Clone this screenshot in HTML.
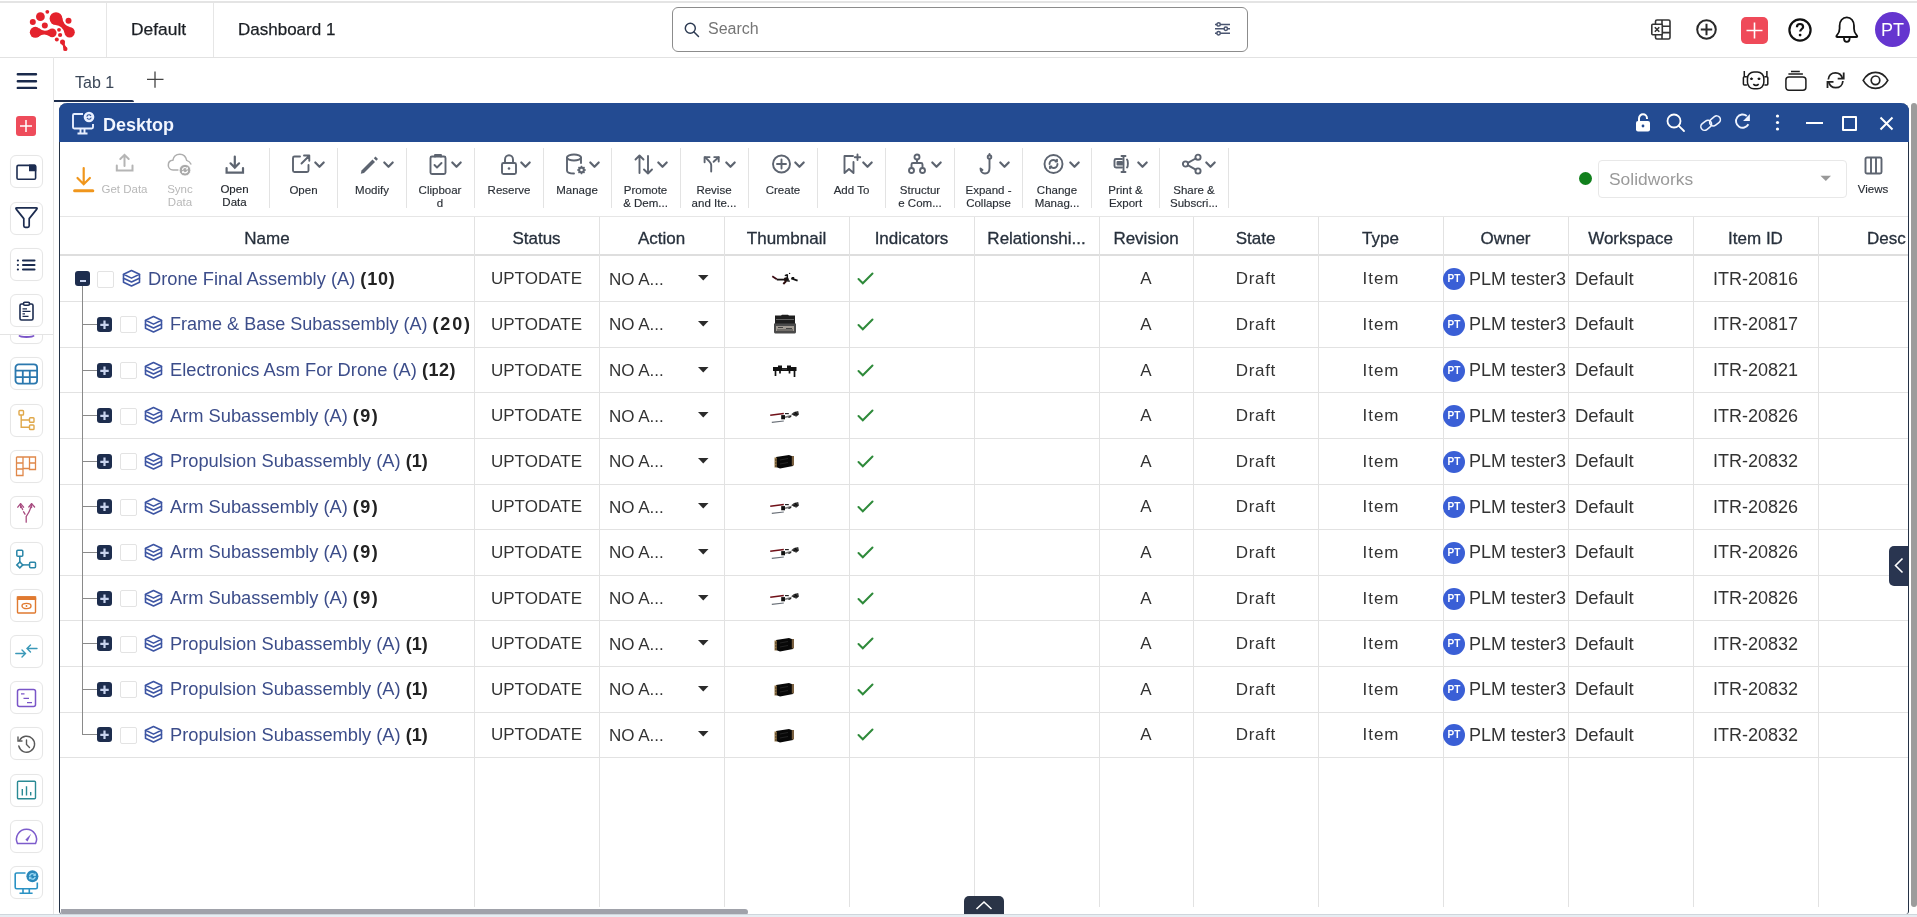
<!DOCTYPE html><html><head><meta charset="utf-8"><style>
*{box-sizing:border-box}
html,body{margin:0;padding:0}
body{width:1917px;height:917px;overflow:hidden;position:relative;background:#fff;font-family:"Liberation Sans",sans-serif;color:#222}
.abs{position:absolute}
.t{position:absolute;white-space:nowrap;line-height:1}
svg{position:absolute;overflow:visible}
.sb{position:absolute;left:10px;width:33px;height:33px;border:1px solid #e6e6e6;border-radius:6px;background:#fff;box-shadow:0 0 1px rgba(0,0,0,0.04)}
.vl{position:absolute;width:1px;background:#e0e0e0}
.hl{position:absolute;height:1px;background:#e0e0e0}
.tb{position:absolute;font-size:11.5px;color:#2a2f36;text-align:center;line-height:12.6px;-webkit-text-stroke:0.15px #2a2f36}
.hd{position:absolute;top:230px;font-size:17px;color:#27303c;line-height:1;text-align:center;-webkit-text-stroke:0.3px #27303c}
.cell{position:absolute;font-size:17px;color:#333;line-height:1;white-space:nowrap}
</style></head><body><div id="root" style="position:absolute;left:0;top:0;width:1917px;height:917px;will-change:transform">

<div class="abs" style="left:0;top:1px;width:1917px;height:2px;background:#e4e4e4"></div>
<div class="abs" style="left:0;top:57px;width:1917px;height:1px;background:#e2e2e2"></div>
<div class="abs" style="left:106px;top:3px;width:1px;height:54px;background:#e6e6e6"></div>
<div class="abs" style="left:213px;top:3px;width:1px;height:54px;background:#e6e6e6"></div>
<svg style="left:0;top:0" width="106" height="57" viewBox="0 0 106 57">
<g fill="#e4222c">
<circle cx="47.3" cy="11.8" r="1.9"/>
<circle cx="40.4" cy="16.7" r="4.4"/>
<circle cx="32.8" cy="21.9" r="3"/>
<circle cx="44.8" cy="25.4" r="3"/>
<circle cx="56" cy="18.6" r="6.4"/>
<circle cx="69.6" cy="32.3" r="5.2"/>
<path d="M55.58 24.99 Q62.45 25.80 64.41 32.61 L69.94 27.11 Q63.15 25.10 62.39 18.22 Z"/>
<circle cx="68.5" cy="20.8" r="3"/>
<circle cx="35.3" cy="32.3" r="5.5"/>
<circle cx="52.2" cy="32.8" r="4.4"/>
<path d="M38.81 36.53 Q43.74 32.75 49.19 36.01 L49.39 29.42 Q43.76 32.35 39.06 28.28 Z"/>
<circle cx="59" cy="29.8" r="1.9"/>
<circle cx="60.1" cy="35" r="2.1"/>
<circle cx="56.8" cy="39.6" r="2"/>
<circle cx="62.5" cy="42.1" r="2.5"/>
<circle cx="65.3" cy="48.9" r="2.2"/>
<path d="M61.40 44.34 Q63.53 45.65 63.22 48.18 L66.27 46.93 Q64.27 45.35 64.86 42.92 Z"/>
</g></svg>
<div class="t" style="left:131px;top:21px;font-size:17.4px;color:#1b1f24;-webkit-text-stroke:0.25px #1b1f24">Default</div>
<div class="t" style="left:238px;top:21px;font-size:17px;color:#1b1f24;-webkit-text-stroke:0.25px #1b1f24">Dashboard 1</div>
<div class="abs" style="left:672px;top:7px;width:576px;height:45px;border:1px solid #8c8c8c;border-radius:6px"></div>
<svg style="left:684px;top:22px" width="16" height="16" viewBox="0 0 16 16"><circle cx="6.3" cy="6.3" r="5" fill="none" stroke="#2c3a52" stroke-width="1.45"/><path d="M10 10 L14.5 14.6" stroke="#2c3a52" stroke-width="1.45" stroke-linecap="round"/></svg>
<div class="t" style="left:708px;top:21px;font-size:16px;color:#757575">Search</div>
<svg style="left:1214px;top:20px" width="17" height="17" viewBox="0 0 17 17" fill="none" stroke="#4a5570" stroke-width="1.5">
<path d="M1 4.4H16M1 8.75H16M1 13.3H16"/><circle cx="4.6" cy="4.4" r="1.7" fill="#fff"/><circle cx="11.8" cy="8.75" r="1.7" fill="#fff"/><circle cx="4.6" cy="13.3" r="1.7" fill="#fff"/></svg>
<svg style="left:1651px;top:19px" width="20" height="21" viewBox="0 0 20 21" fill="none" stroke="#333" stroke-width="1.6">
<rect x="4.5" y="1" width="14.5" height="19" rx="1.5"/><path d="M11 1V20M11 7.2H19M11 13.6H19"/>
<rect x="0.8" y="5.3" width="10.5" height="10.5" rx="1" fill="#fff"/><path d="M3.8 8.3L8.3 12.8M8.3 8.3L3.8 12.8"/></svg>
<svg style="left:1696px;top:19px" width="21" height="21" viewBox="0 0 21 21" fill="none" stroke="#2a2a2a" stroke-width="2"><circle cx="10.5" cy="10.5" r="9.3"/><path d="M10.5 4.8V16.2M4.8 10.5H16.2"/></svg>
<div class="abs" style="left:1741px;top:17px;width:27px;height:27px;background:#ef4a59;border-radius:5px"></div>
<svg style="left:1741px;top:17px" width="27" height="27" viewBox="0 0 27 27" stroke="#fff" stroke-width="1.6"><path d="M13.5 5.5V21.5M5.5 13.5H21.5"/></svg>
<svg style="left:1788px;top:18px" width="24" height="24" viewBox="0 0 24 24" fill="none" stroke="#111" stroke-width="2.2"><circle cx="12" cy="12" r="10.6"/><path d="M8.9 9.2C8.9 7.2 10.3 6 12 6C13.8 6 15.1 7.2 15.1 8.9C15.1 10.9 12.2 11.2 12.2 13.6"/><circle cx="12.1" cy="17.1" r="0.6" fill="#111" stroke-width="1.6"/></svg>
<svg style="left:1835px;top:16px" width="24" height="28" viewBox="0 0 24 28" fill="none" stroke="#111" stroke-width="1.8" stroke-linejoin="round"><path d="M2.2 18.8C3.8 17.2 4.6 15.5 4.6 12.5V9.8C4.6 4.8 7.6 1.4 11.8 1.4C16 1.4 19 4.8 19 9.8V12.5C19 15.5 19.8 17.2 21.4 18.8C22.4 19.8 22.6 21 21.4 21H2.2C1 21 1.2 19.8 2.2 18.8Z"/><path d="M9 21.2V22.6C9 24.6 10.2 25.9 11.8 25.9C13.4 25.9 14.6 24.6 14.6 22.6V21.2"/></svg>
<div class="abs" style="left:1875px;top:12px;width:35px;height:35px;background:#6535cf;border-radius:50%"></div>
<div class="t" style="left:1875px;top:21px;width:35px;text-align:center;font-size:18px;color:#fff">PT</div>
<div class="abs" style="left:53px;top:57px;width:1px;height:858px;background:#e6e6e6"></div>
<svg style="left:16px;top:72px" width="22" height="18" viewBox="0 0 22 18" stroke="#1a2a4c" stroke-width="2.4" stroke-linecap="round"><path d="M1.8 2.2H20M1.8 9.2H20M1.8 15.9H20"/></svg>
<div class="t" style="left:75px;top:75px;font-size:16px;color:#3b4758">Tab 1</div>
<svg style="left:146px;top:71px" width="18" height="18" viewBox="0 0 18 18" stroke="#444" stroke-width="1.3"><path d="M9 0.5V16.8M1 8.4H17.5"/></svg>
<div class="abs" style="left:54px;top:100px;width:80px;height:2px;background:#1d2d4e;border-top-right-radius:2px"></div>
<svg style="left:1742px;top:70px" width="27" height="21" viewBox="0 0 27 21" fill="none" stroke="#1a1a1a" stroke-width="1.5" stroke-linejoin="round">
<rect x="5.45" y="1.95" width="16.4" height="16.9" rx="6.5"/><path d="M4.9 6.8H2.4A1 1 0 0 0 1.4 7.8V13.9A1 1 0 0 0 2.4 14.9H4.9M2.3 7V1"/><path d="M22.4 6.8H24.8A1 1 0 0 1 25.8 7.8V13.9A1 1 0 0 1 24.8 14.9H22.4M24.9 7V1"/><path d="M8.3 9.4L9.5 8.2L10.7 9.4M15.8 9.4L17 8.2L18.2 9.4" stroke-width="1.6"/><path d="M11.3 14.1Q14 16.6 16.7 14.1" stroke-width="1.6"/></svg>
<svg style="left:1785px;top:70px" width="22" height="21" viewBox="0 0 22 21" fill="none" stroke="#1e1e1e" stroke-width="1.5"><rect x="0.9" y="6.9" width="20" height="13.4" rx="3"/><path d="M3.4 3.9H17.9M6 1.4H14.8"/></svg>
<svg style="left:1826px;top:71px" width="20" height="19" viewBox="0 0 20 19" fill="none" stroke="#222" stroke-width="1.8"><path d="M16.5 7.5C15.6 4.2 12.7 1.8 9.5 1.8C5.4 1.8 2.6 4.8 2.3 8.5"/><path d="M17.7 1.4V7.6H11.7"/><path d="M2.7 11C3.6 14.3 6.5 16.7 9.7 16.7C13.8 16.7 16.6 13.7 16.9 10"/><path d="M1.5 17.1V10.9H7.5"/></svg>
<svg style="left:1862px;top:71px" width="27" height="19" viewBox="0 0 27 19" fill="none" stroke="#222" stroke-width="1.7"><path d="M1.2 9.3C4 4.3 8.5 1.3 13.5 1.3C18.5 1.3 23 4.3 25.8 9.3C23 14.3 18.5 17.3 13.5 17.3C8.5 17.3 4 14.3 1.2 9.3Z"/><circle cx="13.5" cy="9.3" r="4.3"/></svg>
<div class="abs" style="left:16px;top:116px;width:20px;height:20px;background:#ee4c5b;border-radius:3px"></div>
<svg style="left:16px;top:116px" width="20" height="20" viewBox="0 0 20 20" stroke="#fff" stroke-width="1.5"><path d="M10 4V16M4 10H16"/></svg>
<div class="sb" style="top:155.1px"></div>
<svg style="left:14px;top:159.6px" width="25" height="24" viewBox="0 0 25 24"><rect x="3" y="5.4" width="18.6" height="13.8" rx="1.3" fill="none" stroke="#1c2c50" stroke-width="1.6"/><path d="M15 4.6H20.8A1.5 1.5 0 0 1 22.3 6.1V11.2H15Z" fill="#1c2c50"/></svg>
<div class="sb" style="top:201.5px"></div>
<svg style="left:14px;top:206px" width="25" height="24" viewBox="0 0 25 24"><path d="M2.8 1.9H22.2Q23.7 1.9 22.8 3.1L15.2 12.6V19.8Q15.2 21.4 13.7 21.4H11.3Q9.8 21.4 9.8 19.8V12.6L2.2 3.1Q1.3 1.9 2.8 1.9Z" fill="none" stroke="#1c2c50" stroke-width="1.7" stroke-linejoin="round"/></svg>
<div class="sb" style="top:248.0px"></div>
<svg style="left:14px;top:252.5px" width="25" height="24" viewBox="0 0 25 24"><g stroke="#1c2c50" stroke-linecap="round"><path d="M9 7.5H20.5M9 12H20.5M9 16.5H20.5" stroke-width="2.1"/><path d="M3.8 7.5H4M3.8 12H4M3.8 16.5H4" stroke-width="2"/></g></svg>
<div class="sb" style="top:294.2px"></div>
<svg style="left:14px;top:298.7px" width="25" height="24" viewBox="0 0 25 24"><g fill="none" stroke="#1c2c50" stroke-width="1.6"><rect x="6" y="5" width="13" height="16" rx="1.5"/><rect x="9.5" y="3.3" width="6" height="3" rx="1.2" fill="#fff"/><path d="M8.5 9.8H13M8.5 12.3H16.5M8.5 14.8H11M8.5 17.3H14.5" stroke-width="1.3"/></g></svg>
<div class="abs" style="left:0;top:334px;width:53px;height:1px;background:#e4e4e4"></div>
<div class="abs" style="left:0;top:335px;width:53px;height:580px;overflow:hidden">
<div class="sb" style="top:-24.0px"></div>
<svg style="left:14px;top:-19.5px" width="25" height="24" viewBox="0 0 25 24"><path d="M5 19.5C6 20.8 8 21 12.5 21C17 21 19 20.8 20 19.5" fill="none" stroke="#7b55c8" stroke-width="1.8"/></svg>
<div class="sb" style="top:22.100000000000023px"></div>
<svg style="left:14px;top:26.600000000000023px" width="25" height="24" viewBox="0 0 25 24"><g fill="none" stroke="#2b78ae" stroke-width="1.8"><rect x="1.5" y="2.4" width="21.6" height="19.2" rx="3.2"/><path d="M1.5 8.6H23.1M1.5 15.1H23.1M8.8 8.6V21.6M15.8 8.6V21.6"/></g></svg>
<div class="sb" style="top:68.5px"></div>
<svg style="left:14px;top:73px" width="25" height="24" viewBox="0 0 25 24"><g fill="none" stroke="#e0a84a" stroke-width="1.4"><rect x="5" y="2.5" width="4.5" height="4.5" rx="0.8"/><rect x="15.5" y="9.8" width="4.5" height="4.5" rx="0.8"/><rect x="15.5" y="17" width="4.5" height="4.5" rx="0.8"/><path d="M7.2 7V19.2H15.5M7.2 12H15.5"/></g></svg>
<div class="sb" style="top:114.5px"></div>
<svg style="left:14px;top:119px" width="25" height="24" viewBox="0 0 25 24"><g fill="none" stroke="#e0884a" stroke-width="1.3"><path d="M2.5 3H21.5V15.5H15.5V3M2.5 3V21.5H9V3M2.5 9H9M2.5 15H9M15.5 9H21.5M9 14.5H15.5"/></g></svg>
<div class="sb" style="top:160.5px"></div>
<svg style="left:14px;top:165px" width="25" height="24" viewBox="0 0 25 24"><g fill="none" stroke="#a84c80" stroke-width="1.3" stroke-linecap="round" stroke-linejoin="round"><path d="M12.2 22.2V16.4C14 14 16.5 11 17.5 4"/><path d="M14.8 7L17.6 3.6L20.6 7"/><path d="M11 14.2L9.6 11.8M8.6 9.6L7.2 6.5" /><path d="M3.8 7.2L6.6 3.6L9.6 7.2"/><path d="M6.6 3.8V7.5"/><path d="M17.6 3.8V7.5"/></g></svg>
<div class="sb" style="top:207.0px"></div>
<svg style="left:14px;top:211.5px" width="25" height="24" viewBox="0 0 25 24"><g fill="none" stroke="#2a86a8" stroke-width="1.5"><rect x="2.8" y="3.3" width="6" height="5.9" rx="1"/><path d="M5.8 9.2V15"/><path d="M5.8 14.9L8.8 17.9L5.8 20.9L2.8 17.9Z"/><path d="M8.8 17.9H15.6"/><rect x="15.6" y="15.2" width="5.9" height="5.6" rx="1"/></g></svg>
<div class="sb" style="top:253.5px"></div>
<svg style="left:14px;top:258px" width="25" height="24" viewBox="0 0 25 24"><g fill="none" stroke="#e07a30" stroke-width="1.4"><rect x="3.5" y="4" width="18" height="16" rx="1"/><path d="M3.5 4H21.5V6.2H3.5Z" fill="#e07a30"/><ellipse cx="12.5" cy="13" rx="4.5" ry="2.6"/><circle cx="12.5" cy="13" r="0.9" fill="#e07a30" stroke="none"/></g></svg>
<div class="sb" style="top:299.5px"></div>
<svg style="left:14px;top:304px" width="25" height="24" viewBox="0 0 25 24"><g fill="none" stroke="#3a98b8" stroke-width="1.4" stroke-linecap="round"><path d="M1.8 14.5H11.5M8 11L11.5 14.5L8 18"/><path d="M23 9.5H13M16.5 6L13 9.5L16.5 13"/></g></svg>
<div class="sb" style="top:346.1px"></div>
<svg style="left:14px;top:350.6px" width="25" height="24" viewBox="0 0 25 24"><g fill="none" stroke="#7a55c8" stroke-width="1.5"><rect x="3.5" y="3.5" width="18" height="17" rx="2"/><path d="M7 7.8H10.5M9.5 12.3H15M13 16.6H18" stroke-width="1.3"/></g></svg>
<div class="sb" style="top:392.0px"></div>
<svg style="left:14px;top:396.5px" width="25" height="24" viewBox="0 0 25 24"><g fill="none" stroke="#5a5a5a" stroke-width="1.4" stroke-linecap="round"><path d="M5.5 8.5A8 8 0 1 1 4.8 14"/><path d="M4 5V9H8"/><path d="M12.5 8V12.5L15.5 15.5"/></g></svg>
<div class="sb" style="top:438.5px"></div>
<svg style="left:14px;top:443px" width="25" height="24" viewBox="0 0 25 24"><g fill="none" stroke="#2a8a94" stroke-width="1.4"><rect x="3.5" y="3.2" width="18" height="17.6" rx="1"/><path d="M8.3 17.5V11M12.5 17.5V8.2M16.7 17.5V14"/></g></svg>
<div class="sb" style="top:484.5px"></div>
<svg style="left:14px;top:489px" width="25" height="24" viewBox="0 0 25 24"><g fill="none" stroke="#7d5ccc" stroke-width="1.5" stroke-linecap="round" stroke-linejoin="round"><path d="M3.5 19.6A10 10 0 1 1 21.5 19.6Z"/></g><path d="M11.3 15.8L17.2 9.8L13.6 17.6Z" fill="#7d5ccc"/></svg>
<div class="sb" style="top:530.5px"></div>
<svg style="left:14px;top:535px" width="25" height="24" viewBox="0 0 25 24"><g fill="none" stroke="#2a92c4" stroke-width="1.6"><path d="M11.5 3H2.7A1.5 1.5 0 0 0 1.2 4.5V17.2A1.5 1.5 0 0 0 2.7 18.7H21.8A1.5 1.5 0 0 0 23.3 17.2V12.4"/><path d="M5.5 23.3H18.6M9 18.7V23.3M15.3 18.7V23.3"/></g><circle cx="18.4" cy="6.3" r="6" fill="#2a88ba"/><path d="M15.6 6C15.9 4.6 17 3.6 18.4 3.6C19.5 3.6 20.4 4.1 20.9 5M21.2 6.8C20.9 8.1 19.8 9.1 18.4 9.1C17.3 9.1 16.4 8.6 15.9 7.7" stroke="#9ad8f4" stroke-width="1.3" fill="none"/><path d="M21.3 3.4V5.4H19.3M15.5 9.3V7.3H17.5" stroke="#9ad8f4" stroke-width="1.1" fill="none"/></svg>
</div>
<div class="abs" style="left:59px;top:103px;width:1850px;height:811px;border:1px solid #243246;border-top:none;border-bottom:none;border-radius:8px 8px 3px 3px;background:#fff"></div>
<div class="abs" style="left:59px;top:103px;width:1850px;height:39px;background:#234b92;border-radius:8px 8px 0 0"></div>
<svg style="left:71px;top:111px" width="24" height="24" viewBox="0 0 24 24" fill="none" stroke="#e8efff" stroke-width="1.9"><path d="M12 3H3.2A1.2 1.2 0 0 0 2 4.2V16.3A1.2 1.2 0 0 0 3.2 17.5H20.8A1.2 1.2 0 0 0 22 16.3V13"/><path d="M6.5 22.5H16.5M9.5 17.5V22.5M13.5 17.5V22.5"/><circle cx="18" cy="6" r="5.3" fill="#e8efff" stroke="none"/><path d="M15.8 5.6C16 4.5 16.9 3.8 18 3.8C18.9 3.8 19.6 4.3 20 5M20.2 6.6C20 7.7 19.1 8.3 18 8.3C17.1 8.3 16.4 7.8 16 7.1" stroke="#234b92" stroke-width="1.1"/></svg>
<div class="t" style="left:103px;top:116px;font-size:18px;font-weight:bold;color:#f2f6ff">Desktop</div>
<svg style="left:1635px;top:113px" width="16" height="19" viewBox="0 0 16 19"><path d="M4 8V5.5C4 3 5.8 1.3 8 1.3C10.2 1.3 12 3 12 5.5V6" fill="none" stroke="#fff" stroke-width="2"/><rect x="1" y="8" width="14" height="10.5" rx="2" fill="#fff"/><circle cx="8" cy="13" r="1.4" fill="#234b92"/></svg>
<svg style="left:1666px;top:113px" width="20" height="20" viewBox="0 0 20 20" fill="none" stroke="#fff" stroke-width="1.8"><circle cx="8" cy="8" r="6.5"/><path d="M12.8 12.8L18 18" stroke-linecap="round"/></svg>
<svg style="left:1695px;top:108px" width="30" height="30" viewBox="0 0 30 30" fill="none" stroke="#eef3ff" stroke-width="1.6"><rect x="-5.8" y="-3.7" width="11.6" height="7.4" rx="3.7" transform="translate(11.2,17.3) rotate(-38)"/><rect x="-5.8" y="-3.7" width="11.6" height="7.4" rx="3.7" transform="translate(20,12.9) rotate(-38)"/></svg>
<svg style="left:1730px;top:108px" width="24" height="24" viewBox="0 0 24 24" fill="none" stroke="#eef3ff" stroke-width="1.9"><path d="M18.4 16.3A6.6 6.6 0 1 1 16.8 8"/><path d="M19.9 6.1V12.9H13.1Z" fill="#eef3ff" stroke="none"/></svg>
<svg style="left:1774px;top:114px" width="7" height="17" viewBox="0 0 7 17" fill="#fff"><circle cx="3.5" cy="2" r="1.6"/><circle cx="3.5" cy="8.5" r="1.6"/><circle cx="3.5" cy="15" r="1.6"/></svg>
<div class="abs" style="left:1806px;top:122px;width:17px;height:2px;background:#fff"></div>
<div class="abs" style="left:1842px;top:116px;width:15px;height:15px;border:2px solid #fff;border-radius:1px"></div>
<svg style="left:1879px;top:116px" width="15" height="15" viewBox="0 0 15 15" stroke="#fff" stroke-width="2"><path d="M1.5 1.5L13.5 13.5M13.5 1.5L1.5 13.5"/></svg>
<div class="abs" style="left:60px;top:216px;width:1848px;height:1px;background:#e6e6e6"></div>
<div class="abs" style="left:269px;top:148px;width:1px;height:60px;background:#e3e3e3"></div>
<div class="abs" style="left:337px;top:148px;width:1px;height:60px;background:#e3e3e3"></div>
<div class="abs" style="left:406px;top:148px;width:1px;height:60px;background:#e3e3e3"></div>
<div class="abs" style="left:474px;top:148px;width:1px;height:60px;background:#e3e3e3"></div>
<div class="abs" style="left:543px;top:148px;width:1px;height:60px;background:#e3e3e3"></div>
<div class="abs" style="left:611px;top:148px;width:1px;height:60px;background:#e3e3e3"></div>
<div class="abs" style="left:680px;top:148px;width:1px;height:60px;background:#e3e3e3"></div>
<div class="abs" style="left:748px;top:148px;width:1px;height:60px;background:#e3e3e3"></div>
<div class="abs" style="left:817px;top:148px;width:1px;height:60px;background:#e3e3e3"></div>
<div class="abs" style="left:885px;top:148px;width:1px;height:60px;background:#e3e3e3"></div>
<div class="abs" style="left:954px;top:148px;width:1px;height:60px;background:#e3e3e3"></div>
<div class="abs" style="left:1022px;top:148px;width:1px;height:60px;background:#e3e3e3"></div>
<div class="abs" style="left:1091px;top:148px;width:1px;height:60px;background:#e3e3e3"></div>
<div class="abs" style="left:1159px;top:148px;width:1px;height:60px;background:#e3e3e3"></div>
<div class="abs" style="left:1228px;top:148px;width:1px;height:60px;background:#e3e3e3"></div>
<svg style="left:73px;top:166px" width="22" height="28" viewBox="0 0 22 28" fill="none" stroke="#f0961c" stroke-width="2.2" stroke-linecap="round"><path d="M10.7 2V18M4.5 12L10.7 18.2L16.9 12"/><path d="M1.6 24.8H19.8" stroke-width="3"/></svg>
<svg style="left:115px;top:153px" width="20" height="20" viewBox="0 0 20 20" fill="none" stroke="#b5b5b5" stroke-width="2" stroke-linecap="round"><path d="M9.5 2V13M5.3 6L9.5 1.8L13.7 6"/><path d="M1.8 12.5V17.5H17.5V12.5"/></svg>
<div class="tb" style="left:96px;top:183px;width:57px;color:#b8b8b8;-webkit-text-stroke:0">Get Data</div>
<svg style="left:167px;top:153px" width="27" height="25" viewBox="0 0 27 25" fill="none" stroke="#aeaeae" stroke-width="1.5"><path d="M11.5 17H6C3.2 17 1.3 14.8 1.3 12.2C1.3 9.5 3.2 7.5 5.8 7.3C6.5 3.8 9.2 1.2 12.8 1.2C16.3 1.2 19 3.7 19.7 7.4C21.7 8 23.3 9.5 24.2 11.5"/><circle cx="18" cy="17.2" r="5.8" fill="#a9a9a9" stroke="#fff" stroke-width="0.8"/><path d="M15.5 16.8C15.7 15.4 16.8 14.5 18 14.5C19 14.5 19.8 15 20.2 15.8M20.6 17.6C20.4 19 19.3 19.9 18 19.9C17 19.9 16.2 19.4 15.8 18.6" stroke="#fff" stroke-width="1.1"/><path d="M20.5 14.3V16.1H18.8M15.5 20.1V18.3H17.2" stroke="#fff" stroke-width="0.9"/></svg>
<div class="tb" style="left:155px;top:183px;width:50px;color:#b8b8b8;-webkit-text-stroke:0">Sync<br>Data</div>
<svg style="left:225px;top:155px" width="20" height="20" viewBox="0 0 20 20" fill="none" stroke="#5d6470" stroke-width="2.2" stroke-linecap="round"><path d="M9.8 1.5V12.5M5.5 8.3L9.8 12.6L14.1 8.3"/><path d="M1.6 13V17.6H18V13"/></svg>
<div class="tb" style="left:206px;top:183px;width:57px;color:#1e2228">Open<br>Data</div>
<div class="tb" style="left:270px;top:184px;width:67px">Open</div>
<svg style="left:291px;top:153px" width="22" height="22" viewBox="0 0 22 22"><g fill="none" stroke="#5d6470" stroke-width="1.9" stroke-linecap="round" stroke-linejoin="round"><path d="M9 3.5H3.5A1.5 1.5 0 0 0 2 5V17.5A1.5 1.5 0 0 0 3.5 19H16A1.5 1.5 0 0 0 17.5 17.5V12"/><path d="M10.5 10.5L18 3M13 2.5H18.3V7.8"/></g></svg>
<svg style="left:314px;top:160.5px" width="11" height="8" viewBox="0 0 11 8" fill="none" stroke="#5d6470" stroke-width="2.2" stroke-linecap="round" stroke-linejoin="round"><path d="M1.3 1.5L5.5 5.8L9.7 1.5"/></svg>
<div class="tb" style="left:338px;top:184px;width:68px">Modify</div>
<svg style="left:358px;top:153px" width="22" height="22" viewBox="0 0 22 22"><path d="M3.5 17.5L14.5 6.5L17 9L6 20L2.8 20.7Z" fill="#5d6470"/><path d="M15.8 5.2L17.5 3.5L20 6L18.3 7.7Z" fill="#5d6470"/></svg>
<svg style="left:383px;top:160.5px" width="11" height="8" viewBox="0 0 11 8" fill="none" stroke="#5d6470" stroke-width="2.2" stroke-linecap="round" stroke-linejoin="round"><path d="M1.3 1.5L5.5 5.8L9.7 1.5"/></svg>
<div class="tb" style="left:406px;top:184px;width:68px">Clipboar<br>d</div>
<svg style="left:427px;top:153px" width="22" height="22" viewBox="0 0 22 22"><g fill="none" stroke="#5d6470" stroke-width="1.9" stroke-linecap="round" stroke-linejoin="round"><rect x="3.5" y="3.5" width="15" height="17.5" rx="1.5"/><path d="M8 3.5V2H14V3.5"/><path d="M7.5 12L10 14.5L14.5 10"/></g></svg>
<svg style="left:451px;top:160.5px" width="11" height="8" viewBox="0 0 11 8" fill="none" stroke="#5d6470" stroke-width="2.2" stroke-linecap="round" stroke-linejoin="round"><path d="M1.3 1.5L5.5 5.8L9.7 1.5"/></svg>
<div class="tb" style="left:475px;top:184px;width:68px">Reserve</div>
<svg style="left:498px;top:153px" width="22" height="22" viewBox="0 0 22 22"><g fill="none" stroke="#5d6470" stroke-width="1.9" stroke-linecap="round" stroke-linejoin="round"><rect x="4" y="10" width="14" height="11" rx="1.5"/><path d="M7 10V6.5C7 4 8.8 2.2 11 2.2C13.2 2.2 15 4 15 6.5V10"/></g><circle cx="11" cy="15.5" r="1.3" fill="#5d6470"/></svg>
<svg style="left:520px;top:160.5px" width="11" height="8" viewBox="0 0 11 8" fill="none" stroke="#5d6470" stroke-width="2.2" stroke-linecap="round" stroke-linejoin="round"><path d="M1.3 1.5L5.5 5.8L9.7 1.5"/></svg>
<div class="tb" style="left:543px;top:184px;width:68px">Manage</div>
<svg style="left:565px;top:153px" width="22" height="22" viewBox="0 0 22 22"><g fill="none" stroke="#5d6470" stroke-width="1.9" stroke-linecap="round" stroke-linejoin="round" stroke-width="1.6"><ellipse cx="9" cy="4.5" rx="7" ry="3"/><path d="M2 4.5V17.5C2 19.2 5 20.5 9 20.5"/><path d="M16 4.5V10"/></g><g transform="translate(16.5,17)"><circle r="2.6" fill="none" stroke="#5d6470" stroke-width="1.6"/><path d="M0 -4.3V4.3M-4.3 0H4.3M-3 -3L3 3M3 -3L-3 3" stroke="#5d6470" stroke-width="1.4"/><circle r="1.3" fill="#fff"/></g></svg>
<svg style="left:589px;top:160.5px" width="11" height="8" viewBox="0 0 11 8" fill="none" stroke="#5d6470" stroke-width="2.2" stroke-linecap="round" stroke-linejoin="round"><path d="M1.3 1.5L5.5 5.8L9.7 1.5"/></svg>
<div class="tb" style="left:611px;top:184px;width:69px">Promote<br>&amp; Dem...</div>
<svg style="left:633px;top:153px" width="22" height="22" viewBox="0 0 22 22"><g fill="none" stroke="#5d6470" stroke-width="1.9" stroke-linecap="round" stroke-linejoin="round" stroke-width="1.7"><path d="M6.5 20V2.5M2.5 6.5L6.5 2.5L10.5 6.5"/><path d="M15 3V20.5M11 16.5L15 20.5L19 16.5"/></g></svg>
<svg style="left:657px;top:160.5px" width="11" height="8" viewBox="0 0 11 8" fill="none" stroke="#5d6470" stroke-width="2.2" stroke-linecap="round" stroke-linejoin="round"><path d="M1.3 1.5L5.5 5.8L9.7 1.5"/></svg>
<div class="tb" style="left:680px;top:184px;width:68px">Revise<br>and Ite...</div>
<svg style="left:702px;top:153px" width="22" height="22" viewBox="0 0 22 22"><g fill="none" stroke="#5d6470" stroke-width="1.9" stroke-linecap="round" stroke-linejoin="round" stroke-width="2" stroke-linecap="butt" stroke-linejoin="miter"><path d="M9.2 18.6V12C9.2 10 8 8.6 3 4.3"/><path d="M2.6 9.2V4.1H7.6"/><path d="M11.6 8.8L16.6 4.2"/><path d="M12.2 4.1H16.7V8.6"/></g></svg>
<svg style="left:725px;top:160.5px" width="11" height="8" viewBox="0 0 11 8" fill="none" stroke="#5d6470" stroke-width="2.2" stroke-linecap="round" stroke-linejoin="round"><path d="M1.3 1.5L5.5 5.8L9.7 1.5"/></svg>
<div class="tb" style="left:749px;top:184px;width:68px">Create</div>
<svg style="left:771px;top:153px" width="22" height="22" viewBox="0 0 22 22"><g fill="none" stroke="#5d6470" stroke-width="1.9" stroke-linecap="round" stroke-linejoin="round"><circle cx="10.5" cy="11" r="8.5"/><path d="M10.5 6.5V15.5M6 11H15"/></g></svg>
<svg style="left:794px;top:160.5px" width="11" height="8" viewBox="0 0 11 8" fill="none" stroke="#5d6470" stroke-width="2.2" stroke-linecap="round" stroke-linejoin="round"><path d="M1.3 1.5L5.5 5.8L9.7 1.5"/></svg>
<div class="tb" style="left:818px;top:184px;width:67px">Add To</div>
<svg style="left:841px;top:153px" width="22" height="22" viewBox="0 0 22 22"><g fill="none" stroke="#5d6470" stroke-width="1.9" stroke-linecap="round" stroke-linejoin="round"><path d="M12 3H3.5V20L8 16L12.5 20V9"/><path d="M16.5 1.5V7M13.8 4.2H19.2"/></g></svg>
<svg style="left:862px;top:160.5px" width="11" height="8" viewBox="0 0 11 8" fill="none" stroke="#5d6470" stroke-width="2.2" stroke-linecap="round" stroke-linejoin="round"><path d="M1.3 1.5L5.5 5.8L9.7 1.5"/></svg>
<div class="tb" style="left:886px;top:184px;width:68px">Structur<br>e Com...</div>
<svg style="left:907px;top:153px" width="22" height="22" viewBox="0 0 22 22"><g fill="none" stroke="#5d6470" stroke-width="1.9" stroke-linecap="round" stroke-linejoin="round" stroke-width="1.7"><circle cx="10" cy="4" r="2.5"/><circle cx="4.5" cy="17.5" r="2.5"/><circle cx="15.5" cy="17.5" r="2.5"/><path d="M10 6.5V10M4.5 15V11.5C4.5 10.5 5 10 6 10H14C15 10 15.5 10.5 15.5 11.5V15"/></g></svg>
<svg style="left:931px;top:160.5px" width="11" height="8" viewBox="0 0 11 8" fill="none" stroke="#5d6470" stroke-width="2.2" stroke-linecap="round" stroke-linejoin="round"><path d="M1.3 1.5L5.5 5.8L9.7 1.5"/></svg>
<div class="tb" style="left:955px;top:184px;width:67px">Expand -<br>Collapse</div>
<svg style="left:977px;top:153px" width="22" height="22" viewBox="0 0 22 22"><g fill="none" stroke="#5d6470" stroke-width="1.9" stroke-linecap="round" stroke-linejoin="round" stroke-width="1.7"><circle cx="12.5" cy="4" r="1.8"/><path d="M12.5 1V2.2M12.5 5.8V15C12.5 18.5 10.5 20.5 8 20.5C5.5 20.5 3.5 18.5 3.5 15.5L5.5 17"/></g></svg>
<svg style="left:999px;top:160.5px" width="11" height="8" viewBox="0 0 11 8" fill="none" stroke="#5d6470" stroke-width="2.2" stroke-linecap="round" stroke-linejoin="round"><path d="M1.3 1.5L5.5 5.8L9.7 1.5"/></svg>
<div class="tb" style="left:1023px;top:184px;width:68px">Change<br>Manag...</div>
<svg style="left:1043px;top:153px" width="22" height="22" viewBox="0 0 22 22"><g fill="none" stroke="#5d6470" stroke-width="1.9" stroke-linecap="round" stroke-linejoin="round" stroke-width="1.7"><circle cx="10.5" cy="11" r="9"/><path d="M6.5 11C6.5 8.5 8.5 7 10.5 7C11.8 7 12.8 7.5 13.5 8.3M12.5 8.5H14V6.8"/><path d="M14.5 11C14.5 13.5 12.5 15 10.5 15C9.2 15 8.2 14.5 7.5 13.7M8.5 13.5H7V15.2"/></g></svg>
<svg style="left:1069px;top:160.5px" width="11" height="8" viewBox="0 0 11 8" fill="none" stroke="#5d6470" stroke-width="2.2" stroke-linecap="round" stroke-linejoin="round"><path d="M1.3 1.5L5.5 5.8L9.7 1.5"/></svg>
<div class="tb" style="left:1092px;top:184px;width:67px">Print &amp;<br>Export</div>
<svg style="left:1112px;top:153px" width="22" height="22" viewBox="0 0 22 22"><g fill="none" stroke="#5d6470" stroke-width="1.9" stroke-linecap="round" stroke-linejoin="round" stroke-width="1.9"><path d="M10 6H4A1.5 1.5 0 0 0 2.5 7.5V13A1.5 1.5 0 0 0 4 14.5H10"/><path d="M5.5 9H10V11.5H5.5Z" fill="#5d6470"/><path d="M11.5 3V19M9.5 3H13.5M9.5 19H13.5"/><path d="M15 6.5C16.2 7.5 16.2 13.5 15 14.5"/></g></svg>
<svg style="left:1137px;top:160.5px" width="11" height="8" viewBox="0 0 11 8" fill="none" stroke="#5d6470" stroke-width="2.2" stroke-linecap="round" stroke-linejoin="round"><path d="M1.3 1.5L5.5 5.8L9.7 1.5"/></svg>
<div class="tb" style="left:1160px;top:184px;width:68px">Share &amp;<br>Subscri...</div>
<svg style="left:1181px;top:153px" width="22" height="22" viewBox="0 0 22 22"><g fill="none" stroke="#5d6470" stroke-width="1.9" stroke-linecap="round" stroke-linejoin="round" stroke-width="1.7"><circle cx="17" cy="4.2" r="2.6"/><circle cx="4.5" cy="11" r="2.6"/><circle cx="17" cy="18" r="2.6"/><path d="M6.8 9.8L14.7 5.5M6.8 12.2L14.7 16.7"/></g></svg>
<svg style="left:1205px;top:160.5px" width="11" height="8" viewBox="0 0 11 8" fill="none" stroke="#5d6470" stroke-width="2.2" stroke-linecap="round" stroke-linejoin="round"><path d="M1.3 1.5L5.5 5.8L9.7 1.5"/></svg>
<div class="abs" style="left:1579px;top:172px;width:13px;height:13px;border-radius:50%;background:#11801c"></div>
<div class="abs" style="left:1598px;top:160px;width:249px;height:38px;border:1px solid #e8e8e8;border-radius:4px"></div>
<div class="t" style="left:1609px;top:171px;font-size:17.4px;color:#9a9a9a">Solidworks</div>
<svg style="left:1820px;top:175px" width="12" height="7" viewBox="0 0 12 7"><path d="M0.5 0.8H11L5.8 6Z" fill="#999"/></svg>
<svg style="left:1864px;top:156px" width="19" height="19" viewBox="0 0 19 19" fill="none" stroke="#5d6470" stroke-width="1.9"><rect x="1.5" y="1.5" width="16" height="16" rx="1.5"/><path d="M7 1.5V17.5M12 1.5V17.5"/></svg>
<div class="tb" style="left:1850px;top:183px;width:46px">Views</div>
<div class="abs" style="left:60px;top:216px;width:1848px;height:1px;background:#e6e6e6"></div>
<div class="abs" style="left:60px;top:254px;width:1848px;height:2px;background:#dedede"></div>
<div class="abs" style="left:60px;top:301.1px;width:1848px;height:1px;background:#e2e2e2"></div>
<div class="abs" style="left:60px;top:346.7px;width:1848px;height:1px;background:#e2e2e2"></div>
<div class="abs" style="left:60px;top:392.3px;width:1848px;height:1px;background:#e2e2e2"></div>
<div class="abs" style="left:60px;top:437.9px;width:1848px;height:1px;background:#e2e2e2"></div>
<div class="abs" style="left:60px;top:483.5px;width:1848px;height:1px;background:#e2e2e2"></div>
<div class="abs" style="left:60px;top:529.1px;width:1848px;height:1px;background:#e2e2e2"></div>
<div class="abs" style="left:60px;top:574.7px;width:1848px;height:1px;background:#e2e2e2"></div>
<div class="abs" style="left:60px;top:620.3px;width:1848px;height:1px;background:#e2e2e2"></div>
<div class="abs" style="left:60px;top:665.9px;width:1848px;height:1px;background:#e2e2e2"></div>
<div class="abs" style="left:60px;top:711.5px;width:1848px;height:1px;background:#e2e2e2"></div>
<div class="abs" style="left:60px;top:757.1px;width:1848px;height:1px;background:#e2e2e2"></div>
<div class="abs" style="left:474px;top:217px;width:1px;height:690px;background:#e2e2e2"></div>
<div class="abs" style="left:599px;top:217px;width:1px;height:690px;background:#e2e2e2"></div>
<div class="abs" style="left:724px;top:217px;width:1px;height:690px;background:#e2e2e2"></div>
<div class="abs" style="left:849px;top:217px;width:1px;height:690px;background:#e2e2e2"></div>
<div class="abs" style="left:974px;top:217px;width:1px;height:690px;background:#e2e2e2"></div>
<div class="abs" style="left:1099px;top:217px;width:1px;height:690px;background:#e2e2e2"></div>
<div class="abs" style="left:1193px;top:217px;width:1px;height:690px;background:#e2e2e2"></div>
<div class="abs" style="left:1318px;top:217px;width:1px;height:690px;background:#e2e2e2"></div>
<div class="abs" style="left:1443px;top:217px;width:1px;height:690px;background:#e2e2e2"></div>
<div class="abs" style="left:1568px;top:217px;width:1px;height:690px;background:#e2e2e2"></div>
<div class="abs" style="left:1693px;top:217px;width:1px;height:690px;background:#e2e2e2"></div>
<div class="abs" style="left:1818px;top:217px;width:1px;height:690px;background:#e2e2e2"></div>
<div class="hd" style="left:60px;width:414px">Name</div>
<div class="hd" style="left:474px;width:125px">Status</div>
<div class="hd" style="left:599px;width:125px">Action</div>
<div class="hd" style="left:724px;width:125px">Thumbnail</div>
<div class="hd" style="left:849px;width:125px">Indicators</div>
<div class="hd" style="left:974px;width:125px">Relationshi...</div>
<div class="hd" style="left:1099px;width:94px">Revision</div>
<div class="hd" style="left:1193px;width:125px">State</div>
<div class="hd" style="left:1318px;width:125px">Type</div>
<div class="hd" style="left:1443px;width:125px">Owner</div>
<div class="hd" style="left:1568px;width:125px">Workspace</div>
<div class="hd" style="left:1693px;width:125px">Item ID</div>
<div class="abs" style="left:1818px;top:217px;width:88px;height:37px;overflow:hidden"><div class="hd" style="left:49px;top:13px;text-align:left">Descriptio</div></div>
<div class="abs" style="left:75px;top:271.3px;width:15px;height:15px;background:#1d2d4e;border-radius:3px"></div>
<div class="abs" style="left:79.5px;top:279.6px;width:6px;height:2px;background:#c9d4ee"></div>
<div class="abs" style="left:97px;top:270.8px;width:17px;height:17px;border:1px solid #e3e3e3;border-radius:2px"></div>
<svg style="left:122px;top:269.3px" width="19" height="19" viewBox="0 0 19 19" fill="none" stroke="#3d55a3" stroke-width="1.6" stroke-linejoin="round"><path d="M9.5 1.5L17.5 5.3L9.5 9.1L1.5 5.3Z"/><path d="M1.5 5.3V9.2L9.5 13L17.5 9.2V5.3"/><path d="M1.5 9.2V13.2L9.5 17L17.5 13.2V9.2"/></svg>
<div class="cell" style="left:148px;top:269.8px;font-size:18.3px;color:#3c4d8a">Drone Final Assembly (A) <b style="color:#222;font-size:18px;letter-spacing:0.8px">(10)</b></div>
<div class="cell" style="left:474px;width:125px;text-align:center;top:270.3px">UPTODATE</div>
<div class="cell" style="left:609px;top:270.8px;color:#333">NO A...</div>
<svg style="left:698px;top:275.3px" width="11" height="6" viewBox="0 0 11 6"><path d="M0 0H10.5L5.25 5.5Z" fill="#2b2b2b"/></svg>
<svg style="left:771px;top:271.5px" width="28" height="14" viewBox="0 0 28 14"><path d="M1.3 4.2L5.8 7.3" stroke="#3a0a12" stroke-width="1.7"/><path d="M5.8 7.6H13" stroke="#151010" stroke-width="1.8"/><ellipse cx="15.3" cy="7.4" rx="2.6" ry="2.1" fill="#1a1010"/><path d="M16.3 2.3V8M13.8 3.6L16.3 2.8" stroke="#111" stroke-width="1.5"/><circle cx="18.6" cy="1.4" r="0.7" fill="#111"/><path d="M12.3 12L15.2 9" stroke="#2a0a0a" stroke-width="1.9"/><path d="M15.5 8.5L18.8 9.2" stroke="#222" stroke-width="1.4"/><path d="M20.2 6.4L26.6 8.6M20.8 6H23.2" stroke="#111" stroke-width="1.8"/></svg>
<svg style="left:857px;top:272.3px" width="17" height="13" viewBox="0 0 17 13" fill="none" stroke="#2e8a3a" stroke-width="2" stroke-linecap="round"><path d="M1.5 7L5.8 11.3L15.5 1.5"/></svg>
<div class="cell" style="left:1099px;width:94px;text-align:center;top:270.3px">A</div>
<div class="cell" style="left:1193px;width:125px;text-align:center;top:270.3px;letter-spacing:0.7px;text-indent:0.7px">Draft</div>
<div class="cell" style="left:1318px;width:125px;text-align:center;top:270.3px;letter-spacing:1px;text-indent:1px">Item</div>
<div class="abs" style="left:1443px;top:268.3px;width:22px;height:22px;border-radius:50%;background:#3a5fd6"></div>
<div class="t" style="left:1443px;width:22px;text-align:center;top:274.3px;font-size:10px;font-weight:bold;color:#fff">PT</div>
<div class="abs" style="left:1466px;top:266.8px;width:102px;height:24px;overflow:hidden"><div class="cell" style="left:3px;top:3px;font-size:18px">PLM tester3</div></div>
<div class="cell" style="left:1575px;top:269.8px;font-size:18.5px">Default</div>
<div class="cell" style="left:1693px;width:125px;text-align:center;top:269.8px;font-size:18px">ITR-20816</div>
<div class="abs" style="left:97px;top:316.9px;width:15px;height:15px;background:#1d2d4e;border-radius:3px"></div>
<svg style="left:97px;top:316.9px" width="15" height="15" viewBox="0 0 15 15" stroke="#c9d4ee" stroke-width="2.2"><path d="M7.5 3.5V12M3.3 7.8H11.7"/></svg>
<div class="abs" style="left:120px;top:316.4px;width:17px;height:17px;border:1px solid #e3e3e3;border-radius:2px"></div>
<svg style="left:144px;top:314.9px" width="19" height="19" viewBox="0 0 19 19" fill="none" stroke="#3d55a3" stroke-width="1.6" stroke-linejoin="round"><path d="M9.5 1.5L17.5 5.3L9.5 9.1L1.5 5.3Z"/><path d="M1.5 5.3V9.2L9.5 13L17.5 9.2V5.3"/><path d="M1.5 9.2V13.2L9.5 17L17.5 13.2V9.2"/></svg>
<div class="cell" style="left:170px;top:315.4px;font-size:18.05px;color:#3c4d8a">Frame &amp; Base Subassembly (A) <b style="color:#222;font-size:18px;letter-spacing:1.8px">(20)</b></div>
<div class="abs" style="left:82px;top:323.9px;width:15px;height:1px;background:#8a8a8a"></div>
<div class="cell" style="left:474px;width:125px;text-align:center;top:315.9px">UPTODATE</div>
<div class="cell" style="left:609px;top:316.4px;color:#333">NO A...</div>
<svg style="left:698px;top:320.9px" width="11" height="6" viewBox="0 0 11 6"><path d="M0 0H10.5L5.25 5.5Z" fill="#2b2b2b"/></svg>
<svg style="left:773px;top:314.4px" width="24" height="20" viewBox="0 0 24 20"><path d="M2 1.5H8L9 0.8H15L16 1.5H22V10.5H2Z" fill="#1e1e1e"/><path d="M1 9.5H23V18C23 19 22 19.5 21 19.5H3C2 19.5 1 19 1 18Z" fill="#4a4a4a"/><path d="M3 12H21V17H3Z" fill="#a09a92"/><path d="M5 13.5H10M13 14.5H19M4 16H20" stroke="#3a3a3a" stroke-width="0.9"/><path d="M3 5.5H21" stroke="#6a6a6a" stroke-width="0.9"/></svg>
<svg style="left:857px;top:317.9px" width="17" height="13" viewBox="0 0 17 13" fill="none" stroke="#2e8a3a" stroke-width="2" stroke-linecap="round"><path d="M1.5 7L5.8 11.3L15.5 1.5"/></svg>
<div class="cell" style="left:1099px;width:94px;text-align:center;top:315.9px">A</div>
<div class="cell" style="left:1193px;width:125px;text-align:center;top:315.9px;letter-spacing:0.7px;text-indent:0.7px">Draft</div>
<div class="cell" style="left:1318px;width:125px;text-align:center;top:315.9px;letter-spacing:1px;text-indent:1px">Item</div>
<div class="abs" style="left:1443px;top:313.9px;width:22px;height:22px;border-radius:50%;background:#3a5fd6"></div>
<div class="t" style="left:1443px;width:22px;text-align:center;top:319.9px;font-size:10px;font-weight:bold;color:#fff">PT</div>
<div class="abs" style="left:1466px;top:312.4px;width:102px;height:24px;overflow:hidden"><div class="cell" style="left:3px;top:3px;font-size:18px">PLM tester3</div></div>
<div class="cell" style="left:1575px;top:315.4px;font-size:18.5px">Default</div>
<div class="cell" style="left:1693px;width:125px;text-align:center;top:315.4px;font-size:18px">ITR-20817</div>
<div class="abs" style="left:97px;top:362.5px;width:15px;height:15px;background:#1d2d4e;border-radius:3px"></div>
<svg style="left:97px;top:362.5px" width="15" height="15" viewBox="0 0 15 15" stroke="#c9d4ee" stroke-width="2.2"><path d="M7.5 3.5V12M3.3 7.8H11.7"/></svg>
<div class="abs" style="left:120px;top:362.0px;width:17px;height:17px;border:1px solid #e3e3e3;border-radius:2px"></div>
<svg style="left:144px;top:360.5px" width="19" height="19" viewBox="0 0 19 19" fill="none" stroke="#3d55a3" stroke-width="1.6" stroke-linejoin="round"><path d="M9.5 1.5L17.5 5.3L9.5 9.1L1.5 5.3Z"/><path d="M1.5 5.3V9.2L9.5 13L17.5 9.2V5.3"/><path d="M1.5 9.2V13.2L9.5 17L17.5 13.2V9.2"/></svg>
<div class="cell" style="left:170px;top:361.0px;font-size:18.3px;color:#3c4d8a">Electronics Asm For Drone (A) <b style="color:#222;font-size:18px;letter-spacing:0.5px">(12)</b></div>
<div class="abs" style="left:82px;top:369.5px;width:15px;height:1px;background:#8a8a8a"></div>
<div class="cell" style="left:474px;width:125px;text-align:center;top:361.5px">UPTODATE</div>
<div class="cell" style="left:609px;top:362.0px;color:#333">NO A...</div>
<svg style="left:698px;top:366.5px" width="11" height="6" viewBox="0 0 11 6"><path d="M0 0H10.5L5.25 5.5Z" fill="#2b2b2b"/></svg>
<svg style="left:772px;top:363.5px" width="26" height="14" viewBox="0 0 26 14"><path d="M1 3H6V1.5H10V4H15V1.5H19V3H24.5V7H1Z" fill="#111"/><path d="M3.5 6V12M8 6V9.5M17.5 6V9.5M22.5 6V13" stroke="#111" stroke-width="1.7"/><path d="M10 5.2H15" stroke="#4a4a4a" stroke-width="1"/></svg>
<svg style="left:857px;top:363.5px" width="17" height="13" viewBox="0 0 17 13" fill="none" stroke="#2e8a3a" stroke-width="2" stroke-linecap="round"><path d="M1.5 7L5.8 11.3L15.5 1.5"/></svg>
<div class="cell" style="left:1099px;width:94px;text-align:center;top:361.5px">A</div>
<div class="cell" style="left:1193px;width:125px;text-align:center;top:361.5px;letter-spacing:0.7px;text-indent:0.7px">Draft</div>
<div class="cell" style="left:1318px;width:125px;text-align:center;top:361.5px;letter-spacing:1px;text-indent:1px">Item</div>
<div class="abs" style="left:1443px;top:359.5px;width:22px;height:22px;border-radius:50%;background:#3a5fd6"></div>
<div class="t" style="left:1443px;width:22px;text-align:center;top:365.5px;font-size:10px;font-weight:bold;color:#fff">PT</div>
<div class="abs" style="left:1466px;top:358.0px;width:102px;height:24px;overflow:hidden"><div class="cell" style="left:3px;top:3px;font-size:18px">PLM tester3</div></div>
<div class="cell" style="left:1575px;top:361.0px;font-size:18.5px">Default</div>
<div class="cell" style="left:1693px;width:125px;text-align:center;top:361.0px;font-size:18px">ITR-20821</div>
<div class="abs" style="left:97px;top:408.1px;width:15px;height:15px;background:#1d2d4e;border-radius:3px"></div>
<svg style="left:97px;top:408.1px" width="15" height="15" viewBox="0 0 15 15" stroke="#c9d4ee" stroke-width="2.2"><path d="M7.5 3.5V12M3.3 7.8H11.7"/></svg>
<div class="abs" style="left:120px;top:407.6px;width:17px;height:17px;border:1px solid #e3e3e3;border-radius:2px"></div>
<svg style="left:144px;top:406.1px" width="19" height="19" viewBox="0 0 19 19" fill="none" stroke="#3d55a3" stroke-width="1.6" stroke-linejoin="round"><path d="M9.5 1.5L17.5 5.3L9.5 9.1L1.5 5.3Z"/><path d="M1.5 5.3V9.2L9.5 13L17.5 9.2V5.3"/><path d="M1.5 9.2V13.2L9.5 17L17.5 13.2V9.2"/></svg>
<div class="cell" style="left:170px;top:406.6px;font-size:18.3px;color:#3c4d8a">Arm Subassembly (A) <b style="color:#222;font-size:18px;letter-spacing:1.5px">(9)</b></div>
<div class="abs" style="left:82px;top:415.1px;width:15px;height:1px;background:#8a8a8a"></div>
<div class="cell" style="left:474px;width:125px;text-align:center;top:407.1px">UPTODATE</div>
<div class="cell" style="left:609px;top:407.6px;color:#333">NO A...</div>
<svg style="left:698px;top:412.1px" width="11" height="6" viewBox="0 0 11 6"><path d="M0 0H10.5L5.25 5.5Z" fill="#2b2b2b"/></svg>
<svg style="left:769px;top:408.6px" width="31" height="15" viewBox="0 0 31 15"><path d="M1.2 6.3L14.8 4.5" stroke="#701018" stroke-width="1.5"/><rect x="12.2" y="6.1" width="3.8" height="4.2" fill="#111"/><path d="M16 4.6H19.8" stroke="#222" stroke-width="1.2"/><path d="M22.2 5.2L25 3L29.2 2L30 5.6L27.2 7.8Z" fill="#3a3a3a"/><path d="M24.5 6L27 4.5M26 3.2L28.5 6" stroke="#111" stroke-width="1.2"/><path d="M16 8.2L22.5 6.6" stroke="#777" stroke-width="1.6"/><path d="M19.5 8.5L22 7.5" stroke="#111" stroke-width="1.2"/><path d="M2.8 13.4L14.8 12" stroke="#6a7078" stroke-width="1.2"/></svg>
<svg style="left:857px;top:409.1px" width="17" height="13" viewBox="0 0 17 13" fill="none" stroke="#2e8a3a" stroke-width="2" stroke-linecap="round"><path d="M1.5 7L5.8 11.3L15.5 1.5"/></svg>
<div class="cell" style="left:1099px;width:94px;text-align:center;top:407.1px">A</div>
<div class="cell" style="left:1193px;width:125px;text-align:center;top:407.1px;letter-spacing:0.7px;text-indent:0.7px">Draft</div>
<div class="cell" style="left:1318px;width:125px;text-align:center;top:407.1px;letter-spacing:1px;text-indent:1px">Item</div>
<div class="abs" style="left:1443px;top:405.1px;width:22px;height:22px;border-radius:50%;background:#3a5fd6"></div>
<div class="t" style="left:1443px;width:22px;text-align:center;top:411.1px;font-size:10px;font-weight:bold;color:#fff">PT</div>
<div class="abs" style="left:1466px;top:403.6px;width:102px;height:24px;overflow:hidden"><div class="cell" style="left:3px;top:3px;font-size:18px">PLM tester3</div></div>
<div class="cell" style="left:1575px;top:406.6px;font-size:18.5px">Default</div>
<div class="cell" style="left:1693px;width:125px;text-align:center;top:406.6px;font-size:18px">ITR-20826</div>
<div class="abs" style="left:97px;top:453.7px;width:15px;height:15px;background:#1d2d4e;border-radius:3px"></div>
<svg style="left:97px;top:453.7px" width="15" height="15" viewBox="0 0 15 15" stroke="#c9d4ee" stroke-width="2.2"><path d="M7.5 3.5V12M3.3 7.8H11.7"/></svg>
<div class="abs" style="left:120px;top:453.2px;width:17px;height:17px;border:1px solid #e3e3e3;border-radius:2px"></div>
<svg style="left:144px;top:451.7px" width="19" height="19" viewBox="0 0 19 19" fill="none" stroke="#3d55a3" stroke-width="1.6" stroke-linejoin="round"><path d="M9.5 1.5L17.5 5.3L9.5 9.1L1.5 5.3Z"/><path d="M1.5 5.3V9.2L9.5 13L17.5 9.2V5.3"/><path d="M1.5 9.2V13.2L9.5 17L17.5 13.2V9.2"/></svg>
<div class="cell" style="left:170px;top:452.2px;font-size:18.3px;color:#3c4d8a">Propulsion Subassembly (A) <b style="color:#222;font-size:18px;letter-spacing:0.0px">(1)</b></div>
<div class="abs" style="left:82px;top:460.7px;width:15px;height:1px;background:#8a8a8a"></div>
<div class="cell" style="left:474px;width:125px;text-align:center;top:452.7px">UPTODATE</div>
<div class="cell" style="left:609px;top:453.2px;color:#333">NO A...</div>
<svg style="left:698px;top:457.7px" width="11" height="6" viewBox="0 0 11 6"><path d="M0 0H10.5L5.25 5.5Z" fill="#2b2b2b"/></svg>
<svg style="left:773px;top:454.2px" width="22" height="15" viewBox="0 0 22 15"><path d="M3 3L16 1L20 2.5V12L7 14.5L3 13Z" fill="#080808"/><path d="M1.5 3.5H3.8V13.5H1.5Z" fill="#9a7a48"/><path d="M18.8 2H21V11.5H18.8Z" fill="#7a6040"/><path d="M2 6H3.5M2 9H3.5M2 12H3.5" stroke="#222" stroke-width="0.8"/><path d="M7 6L15 4.5M7 10L15 8.5" stroke="#2a2a2a" stroke-width="0.8"/></svg>
<svg style="left:857px;top:454.7px" width="17" height="13" viewBox="0 0 17 13" fill="none" stroke="#2e8a3a" stroke-width="2" stroke-linecap="round"><path d="M1.5 7L5.8 11.3L15.5 1.5"/></svg>
<div class="cell" style="left:1099px;width:94px;text-align:center;top:452.7px">A</div>
<div class="cell" style="left:1193px;width:125px;text-align:center;top:452.7px;letter-spacing:0.7px;text-indent:0.7px">Draft</div>
<div class="cell" style="left:1318px;width:125px;text-align:center;top:452.7px;letter-spacing:1px;text-indent:1px">Item</div>
<div class="abs" style="left:1443px;top:450.7px;width:22px;height:22px;border-radius:50%;background:#3a5fd6"></div>
<div class="t" style="left:1443px;width:22px;text-align:center;top:456.7px;font-size:10px;font-weight:bold;color:#fff">PT</div>
<div class="abs" style="left:1466px;top:449.2px;width:102px;height:24px;overflow:hidden"><div class="cell" style="left:3px;top:3px;font-size:18px">PLM tester3</div></div>
<div class="cell" style="left:1575px;top:452.2px;font-size:18.5px">Default</div>
<div class="cell" style="left:1693px;width:125px;text-align:center;top:452.2px;font-size:18px">ITR-20832</div>
<div class="abs" style="left:97px;top:499.3px;width:15px;height:15px;background:#1d2d4e;border-radius:3px"></div>
<svg style="left:97px;top:499.3px" width="15" height="15" viewBox="0 0 15 15" stroke="#c9d4ee" stroke-width="2.2"><path d="M7.5 3.5V12M3.3 7.8H11.7"/></svg>
<div class="abs" style="left:120px;top:498.8px;width:17px;height:17px;border:1px solid #e3e3e3;border-radius:2px"></div>
<svg style="left:144px;top:497.3px" width="19" height="19" viewBox="0 0 19 19" fill="none" stroke="#3d55a3" stroke-width="1.6" stroke-linejoin="round"><path d="M9.5 1.5L17.5 5.3L9.5 9.1L1.5 5.3Z"/><path d="M1.5 5.3V9.2L9.5 13L17.5 9.2V5.3"/><path d="M1.5 9.2V13.2L9.5 17L17.5 13.2V9.2"/></svg>
<div class="cell" style="left:170px;top:497.8px;font-size:18.3px;color:#3c4d8a">Arm Subassembly (A) <b style="color:#222;font-size:18px;letter-spacing:1.5px">(9)</b></div>
<div class="abs" style="left:82px;top:506.3px;width:15px;height:1px;background:#8a8a8a"></div>
<div class="cell" style="left:474px;width:125px;text-align:center;top:498.3px">UPTODATE</div>
<div class="cell" style="left:609px;top:498.8px;color:#333">NO A...</div>
<svg style="left:698px;top:503.3px" width="11" height="6" viewBox="0 0 11 6"><path d="M0 0H10.5L5.25 5.5Z" fill="#2b2b2b"/></svg>
<svg style="left:769px;top:499.8px" width="31" height="15" viewBox="0 0 31 15"><path d="M1.2 6.3L14.8 4.5" stroke="#701018" stroke-width="1.5"/><rect x="12.2" y="6.1" width="3.8" height="4.2" fill="#111"/><path d="M16 4.6H19.8" stroke="#222" stroke-width="1.2"/><path d="M22.2 5.2L25 3L29.2 2L30 5.6L27.2 7.8Z" fill="#3a3a3a"/><path d="M24.5 6L27 4.5M26 3.2L28.5 6" stroke="#111" stroke-width="1.2"/><path d="M16 8.2L22.5 6.6" stroke="#777" stroke-width="1.6"/><path d="M19.5 8.5L22 7.5" stroke="#111" stroke-width="1.2"/><path d="M2.8 13.4L14.8 12" stroke="#6a7078" stroke-width="1.2"/></svg>
<svg style="left:857px;top:500.3px" width="17" height="13" viewBox="0 0 17 13" fill="none" stroke="#2e8a3a" stroke-width="2" stroke-linecap="round"><path d="M1.5 7L5.8 11.3L15.5 1.5"/></svg>
<div class="cell" style="left:1099px;width:94px;text-align:center;top:498.3px">A</div>
<div class="cell" style="left:1193px;width:125px;text-align:center;top:498.3px;letter-spacing:0.7px;text-indent:0.7px">Draft</div>
<div class="cell" style="left:1318px;width:125px;text-align:center;top:498.3px;letter-spacing:1px;text-indent:1px">Item</div>
<div class="abs" style="left:1443px;top:496.3px;width:22px;height:22px;border-radius:50%;background:#3a5fd6"></div>
<div class="t" style="left:1443px;width:22px;text-align:center;top:502.3px;font-size:10px;font-weight:bold;color:#fff">PT</div>
<div class="abs" style="left:1466px;top:494.8px;width:102px;height:24px;overflow:hidden"><div class="cell" style="left:3px;top:3px;font-size:18px">PLM tester3</div></div>
<div class="cell" style="left:1575px;top:497.8px;font-size:18.5px">Default</div>
<div class="cell" style="left:1693px;width:125px;text-align:center;top:497.8px;font-size:18px">ITR-20826</div>
<div class="abs" style="left:97px;top:544.9px;width:15px;height:15px;background:#1d2d4e;border-radius:3px"></div>
<svg style="left:97px;top:544.9px" width="15" height="15" viewBox="0 0 15 15" stroke="#c9d4ee" stroke-width="2.2"><path d="M7.5 3.5V12M3.3 7.8H11.7"/></svg>
<div class="abs" style="left:120px;top:544.4px;width:17px;height:17px;border:1px solid #e3e3e3;border-radius:2px"></div>
<svg style="left:144px;top:542.9px" width="19" height="19" viewBox="0 0 19 19" fill="none" stroke="#3d55a3" stroke-width="1.6" stroke-linejoin="round"><path d="M9.5 1.5L17.5 5.3L9.5 9.1L1.5 5.3Z"/><path d="M1.5 5.3V9.2L9.5 13L17.5 9.2V5.3"/><path d="M1.5 9.2V13.2L9.5 17L17.5 13.2V9.2"/></svg>
<div class="cell" style="left:170px;top:543.4px;font-size:18.3px;color:#3c4d8a">Arm Subassembly (A) <b style="color:#222;font-size:18px;letter-spacing:1.5px">(9)</b></div>
<div class="abs" style="left:82px;top:551.9px;width:15px;height:1px;background:#8a8a8a"></div>
<div class="cell" style="left:474px;width:125px;text-align:center;top:543.9px">UPTODATE</div>
<div class="cell" style="left:609px;top:544.4px;color:#333">NO A...</div>
<svg style="left:698px;top:548.9px" width="11" height="6" viewBox="0 0 11 6"><path d="M0 0H10.5L5.25 5.5Z" fill="#2b2b2b"/></svg>
<svg style="left:769px;top:545.4px" width="31" height="15" viewBox="0 0 31 15"><path d="M1.2 6.3L14.8 4.5" stroke="#701018" stroke-width="1.5"/><rect x="12.2" y="6.1" width="3.8" height="4.2" fill="#111"/><path d="M16 4.6H19.8" stroke="#222" stroke-width="1.2"/><path d="M22.2 5.2L25 3L29.2 2L30 5.6L27.2 7.8Z" fill="#3a3a3a"/><path d="M24.5 6L27 4.5M26 3.2L28.5 6" stroke="#111" stroke-width="1.2"/><path d="M16 8.2L22.5 6.6" stroke="#777" stroke-width="1.6"/><path d="M19.5 8.5L22 7.5" stroke="#111" stroke-width="1.2"/><path d="M2.8 13.4L14.8 12" stroke="#6a7078" stroke-width="1.2"/></svg>
<svg style="left:857px;top:545.9px" width="17" height="13" viewBox="0 0 17 13" fill="none" stroke="#2e8a3a" stroke-width="2" stroke-linecap="round"><path d="M1.5 7L5.8 11.3L15.5 1.5"/></svg>
<div class="cell" style="left:1099px;width:94px;text-align:center;top:543.9px">A</div>
<div class="cell" style="left:1193px;width:125px;text-align:center;top:543.9px;letter-spacing:0.7px;text-indent:0.7px">Draft</div>
<div class="cell" style="left:1318px;width:125px;text-align:center;top:543.9px;letter-spacing:1px;text-indent:1px">Item</div>
<div class="abs" style="left:1443px;top:541.9px;width:22px;height:22px;border-radius:50%;background:#3a5fd6"></div>
<div class="t" style="left:1443px;width:22px;text-align:center;top:547.9px;font-size:10px;font-weight:bold;color:#fff">PT</div>
<div class="abs" style="left:1466px;top:540.4px;width:102px;height:24px;overflow:hidden"><div class="cell" style="left:3px;top:3px;font-size:18px">PLM tester3</div></div>
<div class="cell" style="left:1575px;top:543.4px;font-size:18.5px">Default</div>
<div class="cell" style="left:1693px;width:125px;text-align:center;top:543.4px;font-size:18px">ITR-20826</div>
<div class="abs" style="left:97px;top:590.5px;width:15px;height:15px;background:#1d2d4e;border-radius:3px"></div>
<svg style="left:97px;top:590.5px" width="15" height="15" viewBox="0 0 15 15" stroke="#c9d4ee" stroke-width="2.2"><path d="M7.5 3.5V12M3.3 7.8H11.7"/></svg>
<div class="abs" style="left:120px;top:590.0px;width:17px;height:17px;border:1px solid #e3e3e3;border-radius:2px"></div>
<svg style="left:144px;top:588.5px" width="19" height="19" viewBox="0 0 19 19" fill="none" stroke="#3d55a3" stroke-width="1.6" stroke-linejoin="round"><path d="M9.5 1.5L17.5 5.3L9.5 9.1L1.5 5.3Z"/><path d="M1.5 5.3V9.2L9.5 13L17.5 9.2V5.3"/><path d="M1.5 9.2V13.2L9.5 17L17.5 13.2V9.2"/></svg>
<div class="cell" style="left:170px;top:589.0px;font-size:18.3px;color:#3c4d8a">Arm Subassembly (A) <b style="color:#222;font-size:18px;letter-spacing:1.5px">(9)</b></div>
<div class="abs" style="left:82px;top:597.5px;width:15px;height:1px;background:#8a8a8a"></div>
<div class="cell" style="left:474px;width:125px;text-align:center;top:589.5px">UPTODATE</div>
<div class="cell" style="left:609px;top:590.0px;color:#333">NO A...</div>
<svg style="left:698px;top:594.5px" width="11" height="6" viewBox="0 0 11 6"><path d="M0 0H10.5L5.25 5.5Z" fill="#2b2b2b"/></svg>
<svg style="left:769px;top:591.0px" width="31" height="15" viewBox="0 0 31 15"><path d="M1.2 6.3L14.8 4.5" stroke="#701018" stroke-width="1.5"/><rect x="12.2" y="6.1" width="3.8" height="4.2" fill="#111"/><path d="M16 4.6H19.8" stroke="#222" stroke-width="1.2"/><path d="M22.2 5.2L25 3L29.2 2L30 5.6L27.2 7.8Z" fill="#3a3a3a"/><path d="M24.5 6L27 4.5M26 3.2L28.5 6" stroke="#111" stroke-width="1.2"/><path d="M16 8.2L22.5 6.6" stroke="#777" stroke-width="1.6"/><path d="M19.5 8.5L22 7.5" stroke="#111" stroke-width="1.2"/><path d="M2.8 13.4L14.8 12" stroke="#6a7078" stroke-width="1.2"/></svg>
<svg style="left:857px;top:591.5px" width="17" height="13" viewBox="0 0 17 13" fill="none" stroke="#2e8a3a" stroke-width="2" stroke-linecap="round"><path d="M1.5 7L5.8 11.3L15.5 1.5"/></svg>
<div class="cell" style="left:1099px;width:94px;text-align:center;top:589.5px">A</div>
<div class="cell" style="left:1193px;width:125px;text-align:center;top:589.5px;letter-spacing:0.7px;text-indent:0.7px">Draft</div>
<div class="cell" style="left:1318px;width:125px;text-align:center;top:589.5px;letter-spacing:1px;text-indent:1px">Item</div>
<div class="abs" style="left:1443px;top:587.5px;width:22px;height:22px;border-radius:50%;background:#3a5fd6"></div>
<div class="t" style="left:1443px;width:22px;text-align:center;top:593.5px;font-size:10px;font-weight:bold;color:#fff">PT</div>
<div class="abs" style="left:1466px;top:586.0px;width:102px;height:24px;overflow:hidden"><div class="cell" style="left:3px;top:3px;font-size:18px">PLM tester3</div></div>
<div class="cell" style="left:1575px;top:589.0px;font-size:18.5px">Default</div>
<div class="cell" style="left:1693px;width:125px;text-align:center;top:589.0px;font-size:18px">ITR-20826</div>
<div class="abs" style="left:97px;top:636.1px;width:15px;height:15px;background:#1d2d4e;border-radius:3px"></div>
<svg style="left:97px;top:636.1px" width="15" height="15" viewBox="0 0 15 15" stroke="#c9d4ee" stroke-width="2.2"><path d="M7.5 3.5V12M3.3 7.8H11.7"/></svg>
<div class="abs" style="left:120px;top:635.6px;width:17px;height:17px;border:1px solid #e3e3e3;border-radius:2px"></div>
<svg style="left:144px;top:634.1px" width="19" height="19" viewBox="0 0 19 19" fill="none" stroke="#3d55a3" stroke-width="1.6" stroke-linejoin="round"><path d="M9.5 1.5L17.5 5.3L9.5 9.1L1.5 5.3Z"/><path d="M1.5 5.3V9.2L9.5 13L17.5 9.2V5.3"/><path d="M1.5 9.2V13.2L9.5 17L17.5 13.2V9.2"/></svg>
<div class="cell" style="left:170px;top:634.6px;font-size:18.3px;color:#3c4d8a">Propulsion Subassembly (A) <b style="color:#222;font-size:18px;letter-spacing:0.0px">(1)</b></div>
<div class="abs" style="left:82px;top:643.1px;width:15px;height:1px;background:#8a8a8a"></div>
<div class="cell" style="left:474px;width:125px;text-align:center;top:635.1px">UPTODATE</div>
<div class="cell" style="left:609px;top:635.6px;color:#333">NO A...</div>
<svg style="left:698px;top:640.1px" width="11" height="6" viewBox="0 0 11 6"><path d="M0 0H10.5L5.25 5.5Z" fill="#2b2b2b"/></svg>
<svg style="left:773px;top:636.6px" width="22" height="15" viewBox="0 0 22 15"><path d="M3 3L16 1L20 2.5V12L7 14.5L3 13Z" fill="#080808"/><path d="M1.5 3.5H3.8V13.5H1.5Z" fill="#9a7a48"/><path d="M18.8 2H21V11.5H18.8Z" fill="#7a6040"/><path d="M2 6H3.5M2 9H3.5M2 12H3.5" stroke="#222" stroke-width="0.8"/><path d="M7 6L15 4.5M7 10L15 8.5" stroke="#2a2a2a" stroke-width="0.8"/></svg>
<svg style="left:857px;top:637.1px" width="17" height="13" viewBox="0 0 17 13" fill="none" stroke="#2e8a3a" stroke-width="2" stroke-linecap="round"><path d="M1.5 7L5.8 11.3L15.5 1.5"/></svg>
<div class="cell" style="left:1099px;width:94px;text-align:center;top:635.1px">A</div>
<div class="cell" style="left:1193px;width:125px;text-align:center;top:635.1px;letter-spacing:0.7px;text-indent:0.7px">Draft</div>
<div class="cell" style="left:1318px;width:125px;text-align:center;top:635.1px;letter-spacing:1px;text-indent:1px">Item</div>
<div class="abs" style="left:1443px;top:633.1px;width:22px;height:22px;border-radius:50%;background:#3a5fd6"></div>
<div class="t" style="left:1443px;width:22px;text-align:center;top:639.1px;font-size:10px;font-weight:bold;color:#fff">PT</div>
<div class="abs" style="left:1466px;top:631.6px;width:102px;height:24px;overflow:hidden"><div class="cell" style="left:3px;top:3px;font-size:18px">PLM tester3</div></div>
<div class="cell" style="left:1575px;top:634.6px;font-size:18.5px">Default</div>
<div class="cell" style="left:1693px;width:125px;text-align:center;top:634.6px;font-size:18px">ITR-20832</div>
<div class="abs" style="left:97px;top:681.7px;width:15px;height:15px;background:#1d2d4e;border-radius:3px"></div>
<svg style="left:97px;top:681.7px" width="15" height="15" viewBox="0 0 15 15" stroke="#c9d4ee" stroke-width="2.2"><path d="M7.5 3.5V12M3.3 7.8H11.7"/></svg>
<div class="abs" style="left:120px;top:681.2px;width:17px;height:17px;border:1px solid #e3e3e3;border-radius:2px"></div>
<svg style="left:144px;top:679.7px" width="19" height="19" viewBox="0 0 19 19" fill="none" stroke="#3d55a3" stroke-width="1.6" stroke-linejoin="round"><path d="M9.5 1.5L17.5 5.3L9.5 9.1L1.5 5.3Z"/><path d="M1.5 5.3V9.2L9.5 13L17.5 9.2V5.3"/><path d="M1.5 9.2V13.2L9.5 17L17.5 13.2V9.2"/></svg>
<div class="cell" style="left:170px;top:680.2px;font-size:18.3px;color:#3c4d8a">Propulsion Subassembly (A) <b style="color:#222;font-size:18px;letter-spacing:0.0px">(1)</b></div>
<div class="abs" style="left:82px;top:688.7px;width:15px;height:1px;background:#8a8a8a"></div>
<div class="cell" style="left:474px;width:125px;text-align:center;top:680.7px">UPTODATE</div>
<div class="cell" style="left:609px;top:681.2px;color:#333">NO A...</div>
<svg style="left:698px;top:685.7px" width="11" height="6" viewBox="0 0 11 6"><path d="M0 0H10.5L5.25 5.5Z" fill="#2b2b2b"/></svg>
<svg style="left:773px;top:682.2px" width="22" height="15" viewBox="0 0 22 15"><path d="M3 3L16 1L20 2.5V12L7 14.5L3 13Z" fill="#080808"/><path d="M1.5 3.5H3.8V13.5H1.5Z" fill="#9a7a48"/><path d="M18.8 2H21V11.5H18.8Z" fill="#7a6040"/><path d="M2 6H3.5M2 9H3.5M2 12H3.5" stroke="#222" stroke-width="0.8"/><path d="M7 6L15 4.5M7 10L15 8.5" stroke="#2a2a2a" stroke-width="0.8"/></svg>
<svg style="left:857px;top:682.7px" width="17" height="13" viewBox="0 0 17 13" fill="none" stroke="#2e8a3a" stroke-width="2" stroke-linecap="round"><path d="M1.5 7L5.8 11.3L15.5 1.5"/></svg>
<div class="cell" style="left:1099px;width:94px;text-align:center;top:680.7px">A</div>
<div class="cell" style="left:1193px;width:125px;text-align:center;top:680.7px;letter-spacing:0.7px;text-indent:0.7px">Draft</div>
<div class="cell" style="left:1318px;width:125px;text-align:center;top:680.7px;letter-spacing:1px;text-indent:1px">Item</div>
<div class="abs" style="left:1443px;top:678.7px;width:22px;height:22px;border-radius:50%;background:#3a5fd6"></div>
<div class="t" style="left:1443px;width:22px;text-align:center;top:684.7px;font-size:10px;font-weight:bold;color:#fff">PT</div>
<div class="abs" style="left:1466px;top:677.2px;width:102px;height:24px;overflow:hidden"><div class="cell" style="left:3px;top:3px;font-size:18px">PLM tester3</div></div>
<div class="cell" style="left:1575px;top:680.2px;font-size:18.5px">Default</div>
<div class="cell" style="left:1693px;width:125px;text-align:center;top:680.2px;font-size:18px">ITR-20832</div>
<div class="abs" style="left:97px;top:727.3px;width:15px;height:15px;background:#1d2d4e;border-radius:3px"></div>
<svg style="left:97px;top:727.3px" width="15" height="15" viewBox="0 0 15 15" stroke="#c9d4ee" stroke-width="2.2"><path d="M7.5 3.5V12M3.3 7.8H11.7"/></svg>
<div class="abs" style="left:120px;top:726.8px;width:17px;height:17px;border:1px solid #e3e3e3;border-radius:2px"></div>
<svg style="left:144px;top:725.3px" width="19" height="19" viewBox="0 0 19 19" fill="none" stroke="#3d55a3" stroke-width="1.6" stroke-linejoin="round"><path d="M9.5 1.5L17.5 5.3L9.5 9.1L1.5 5.3Z"/><path d="M1.5 5.3V9.2L9.5 13L17.5 9.2V5.3"/><path d="M1.5 9.2V13.2L9.5 17L17.5 13.2V9.2"/></svg>
<div class="cell" style="left:170px;top:725.8px;font-size:18.3px;color:#3c4d8a">Propulsion Subassembly (A) <b style="color:#222;font-size:18px;letter-spacing:0.0px">(1)</b></div>
<div class="abs" style="left:82px;top:734.3px;width:15px;height:1px;background:#8a8a8a"></div>
<div class="cell" style="left:474px;width:125px;text-align:center;top:726.3px">UPTODATE</div>
<div class="cell" style="left:609px;top:726.8px;color:#333">NO A...</div>
<svg style="left:698px;top:731.3px" width="11" height="6" viewBox="0 0 11 6"><path d="M0 0H10.5L5.25 5.5Z" fill="#2b2b2b"/></svg>
<svg style="left:773px;top:727.8px" width="22" height="15" viewBox="0 0 22 15"><path d="M3 3L16 1L20 2.5V12L7 14.5L3 13Z" fill="#080808"/><path d="M1.5 3.5H3.8V13.5H1.5Z" fill="#9a7a48"/><path d="M18.8 2H21V11.5H18.8Z" fill="#7a6040"/><path d="M2 6H3.5M2 9H3.5M2 12H3.5" stroke="#222" stroke-width="0.8"/><path d="M7 6L15 4.5M7 10L15 8.5" stroke="#2a2a2a" stroke-width="0.8"/></svg>
<svg style="left:857px;top:728.3px" width="17" height="13" viewBox="0 0 17 13" fill="none" stroke="#2e8a3a" stroke-width="2" stroke-linecap="round"><path d="M1.5 7L5.8 11.3L15.5 1.5"/></svg>
<div class="cell" style="left:1099px;width:94px;text-align:center;top:726.3px">A</div>
<div class="cell" style="left:1193px;width:125px;text-align:center;top:726.3px;letter-spacing:0.7px;text-indent:0.7px">Draft</div>
<div class="cell" style="left:1318px;width:125px;text-align:center;top:726.3px;letter-spacing:1px;text-indent:1px">Item</div>
<div class="abs" style="left:1443px;top:724.3px;width:22px;height:22px;border-radius:50%;background:#3a5fd6"></div>
<div class="t" style="left:1443px;width:22px;text-align:center;top:730.3px;font-size:10px;font-weight:bold;color:#fff">PT</div>
<div class="abs" style="left:1466px;top:722.8px;width:102px;height:24px;overflow:hidden"><div class="cell" style="left:3px;top:3px;font-size:18px">PLM tester3</div></div>
<div class="cell" style="left:1575px;top:725.8px;font-size:18.5px">Default</div>
<div class="cell" style="left:1693px;width:125px;text-align:center;top:725.8px;font-size:18px">ITR-20832</div>
<div class="abs" style="left:82px;top:286.3px;width:1px;height:448.5px;background:#8a8a8a"></div>
<div class="abs" style="left:1889px;top:546px;width:19px;height:40px;background:#293550;border-radius:5px 0 0 5px"></div>
<svg style="left:1893px;top:557px" width="11" height="17" viewBox="0 0 11 17" fill="none" stroke="#fff" stroke-width="1.6"><path d="M9.5 1.5L2.5 8.5L9.5 15.5"/></svg>
<div class="abs" style="left:964px;top:896px;width:40px;height:18px;background:#2a3447;border-radius:5px 5px 0 0"></div>
<svg style="left:975px;top:900px" width="18" height="10" viewBox="0 0 18 10" fill="none" stroke="#fff" stroke-width="1.6"><path d="M1.5 9L9 2L16.5 9"/></svg>
<div class="abs" style="left:61px;top:909px;width:687px;height:6px;background:#a0a2aa;border-radius:0 3px 3px 3px"></div>
<div class="abs" style="left:1911px;top:103px;width:6px;height:804px;background:#9c9c9c;border-radius:3px"></div>
<div class="abs" style="left:0;top:914px;width:1917px;height:1px;background:#cfd6dc"></div>
<div class="abs" style="left:0;top:915px;width:1917px;height:2px;background:#e6edf2"></div>
</div></body></html>
